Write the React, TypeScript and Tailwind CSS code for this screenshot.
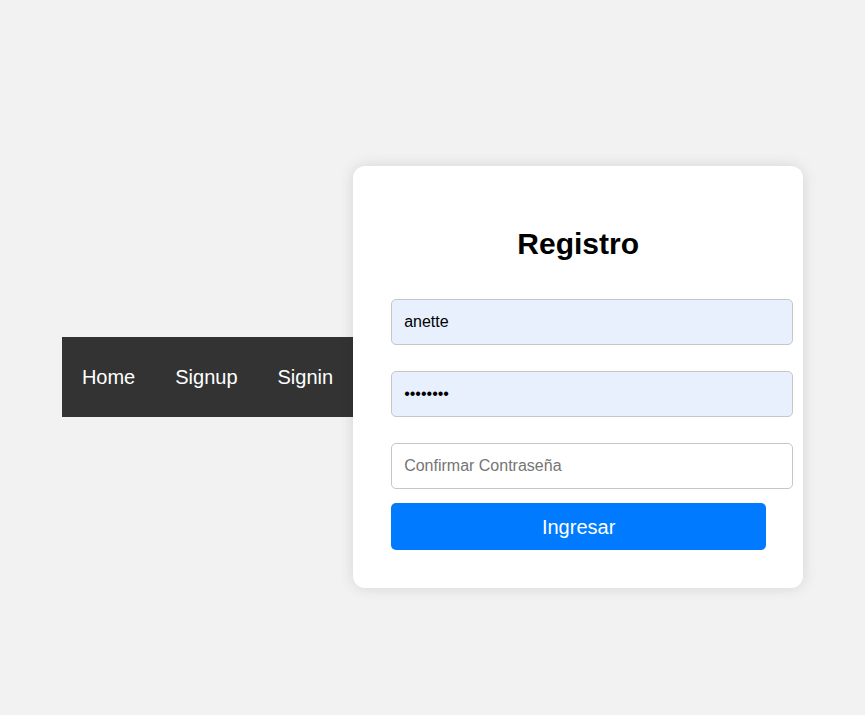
export default function App() {
  return (
    <div className="flex h-[715px] items-center justify-center bg-[#f2f2f2] pt-[39px] font-['Liberation_Sans',Arial,sans-serif]">
      <nav className="flex h-20 items-center bg-[#333333]">
        <a href="#" className="px-5 text-xl text-white">Home</a>
        <a href="#" className="px-5 text-xl text-white">Signup</a>
        <a href="#" className="px-5 text-xl text-white">Signin</a>
      </nav>
      <div className="w-[450px] rounded-xl bg-white px-[38px] pb-[38px] pt-[60px] shadow-[0_0_15px_rgba(0,0,0,0.12)]">
        <h1 className="text-center text-[30px] font-bold leading-9 text-black">Registro</h1>
        <form className="mt-[37px] flex flex-col">
          <input
            type="text"
            defaultValue="anette"
            className="h-[46px] w-[402px] rounded-[5px] border border-[#c6c6c6] bg-[#e8f0fe] px-3 text-base text-black outline-none"
          />
          <input
            type="password"
            defaultValue="anette12"
            className="mt-[26px] h-[46px] w-[402px] rounded-[5px] border border-[#c6c6c6] bg-[#e8f0fe] px-3 text-base text-black outline-none"
          />
          <input
            type="password"
            placeholder="Confirmar Contraseña"
            className="mt-[26px] h-[46px] w-[402px] rounded-[5px] border border-[#c6c6c6] bg-white px-3 text-base text-black outline-none placeholder:text-[#757575]"
          />
          <button
            type="button"
            className="mt-[14px] h-[47px] w-[375px] rounded-[5px] bg-[#007bff] text-xl text-white"
          >
            Ingresar
          </button>
        </form>
      </div>
    </div>
  );
}
